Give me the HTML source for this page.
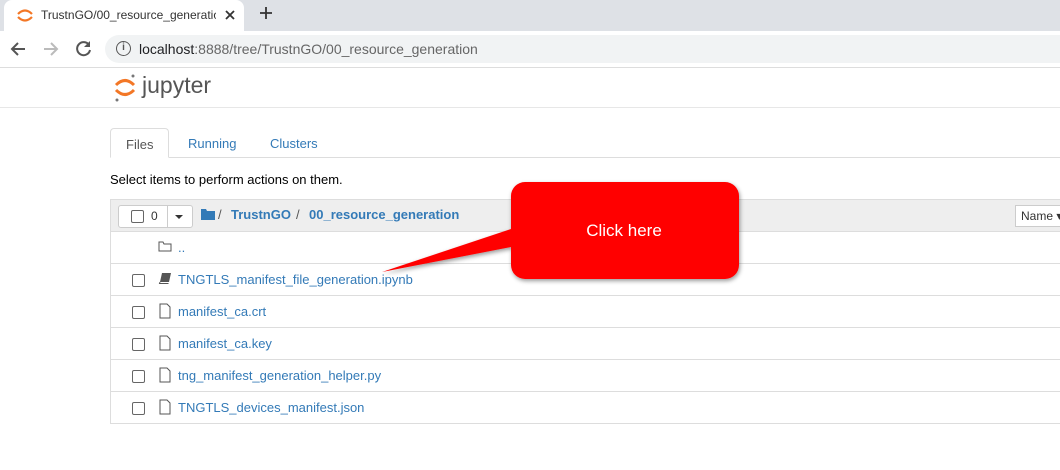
<!DOCTYPE html>
<html><head><style>
*{margin:0;padding:0;box-sizing:border-box}
body{width:1060px;height:470px;overflow:hidden;background:#fff;font-family:"Liberation Sans",Arial,sans-serif;position:relative}
.abs{position:absolute}
.row{position:absolute;left:110px;width:960px;height:32px;border-top:1px solid #ddd;font-size:13px}
.cb{position:absolute;left:22px;top:10px;width:13px;height:13px;border:1px solid #666;border-radius:2px;background:#fff}
.nm{position:absolute;left:68px;top:8px;color:#337ab7}
.ic{position:absolute;left:48px;top:7px}
</style></head><body>
<div class="abs" style="left:0;top:0;width:1060px;height:31px;background:#dee1e6"></div>
<div class="abs" style="left:4px;top:0;width:240px;height:31px;background:#fff;border-radius:8px 8px 0 0"></div>
<svg class="abs" style="left:16px;top:6px" width="18" height="18" viewBox="0 0 18 18"><path d="M2 8 Q9 1 16 8" stroke="#f37726" stroke-width="2.2" fill="none"/><path d="M2 11 Q9 18 16 11" stroke="#f37726" stroke-width="2.2" fill="none"/></svg>
<div class="abs" style="left:41px;top:8px;font-size:12px;color:#333;width:175px;overflow:hidden;white-space:nowrap">TrustnGO/00_resource_generation</div>
<svg class="abs" style="left:224px;top:9px" width="12" height="12"><path d="M2 2L10 10M10 2L2 10" stroke="#333" stroke-width="1.8"/></svg>
<svg class="abs" style="left:259px;top:6px" width="14" height="14"><path d="M7 1v12M1 7h12" stroke="#333" stroke-width="1.8"/></svg>
<svg class="abs" style="left:10px;top:41px" width="16" height="16"><path d="M15 8H2M8 2L2 8l6 6" stroke="#555" stroke-width="2" fill="none"/></svg>
<svg class="abs" style="left:43px;top:41px" width="16" height="16"><path d="M1 8h13M8 2l6 6-6 6" stroke="#bbb" stroke-width="2" fill="none"/></svg>
<svg class="abs" style="left:75px;top:40px" width="17" height="17"><path d="M14 5A6.5 6.5 0 1 0 15 10" stroke="#555" stroke-width="2" fill="none"/><path d="M15 1v6h-6z" fill="#555"/></svg>
<div class="abs" style="left:105px;top:35px;width:970px;height:28px;background:#f1f3f4;border-radius:14px"></div>
<div class="abs" style="left:116px;top:41px;width:15px;height:15px;border:1.5px solid #555;border-radius:50%;font-size:10px;text-align:center;line-height:12px;color:#555;font-weight:bold">i</div>
<div class="abs" style="left:139px;top:41px;font-size:14px;color:#202124">localhost<span style="color:#666">:8888/tree/TrustnGO/00_resource_generation</span></div>
<div class="abs" style="left:0;top:67px;width:1060px;height:1px;background:#ddd"></div>
<svg class="abs" style="left:113px;top:73px" width="24" height="30" viewBox="0 0 24 30"><path d="M3 12 Q12 3 21 12" stroke="#f37726" stroke-width="3" fill="none"/><path d="M3 17 Q12 26 21 17" stroke="#f37726" stroke-width="3" fill="none"/><circle cx="20" cy="3" r="1.5" fill="#767677"/><circle cx="4" cy="27" r="1.5" fill="#767677"/></svg>
<div class="abs" style="left:142px;top:72px;font-size:23px;color:#555">jupyter</div>
<div class="abs" style="left:0;top:107px;width:1060px;height:1px;background:#e7e7e7"></div>
<div class="abs" style="left:110px;top:157px;width:950px;height:1px;background:#ddd"></div>
<div class="abs" style="left:110px;top:128px;width:59px;height:30px;border:1px solid #ddd;border-bottom:1px solid #fff;border-radius:4px 4px 0 0;background:#fff;font-size:13px;color:#555;padding:8px 0 0 15px">Files</div>
<div class="abs" style="left:188px;top:136px;font-size:13px;color:#337ab7">Running</div>
<div class="abs" style="left:270px;top:136px;font-size:13px;color:#337ab7">Clusters</div>
<div class="abs" style="left:110px;top:172px;font-size:13px;color:#000">Select items to perform actions on them.</div>
<div class="abs" style="left:110px;top:199px;width:960px;height:225px;border:1px solid #ddd"></div>
<div class="abs" style="left:111px;top:200px;width:950px;height:31px;background:#eee"></div>
<div class="abs" style="left:118px;top:205px;width:75px;height:23px;border:1px solid #ccc;background:#fff;border-radius:3px"></div>
<div class="abs" style="left:167px;top:205px;width:1px;height:23px;background:#ccc"></div>
<div class="abs" style="left:131px;top:210px;width:13px;height:13px;border:1px solid #666;border-radius:2px"></div>
<div class="abs" style="left:151px;top:209px;font-size:12px;color:#333">0</div>
<div class="abs" style="left:175px;top:215px;border:4px solid transparent;border-top:4px solid #333"></div>
<svg class="abs" style="left:201px;top:208px" width="14" height="12"><path d="M0 1h5l1 2h8v9H0z" fill="#337ab7"/></svg>
<div class="abs" style="left:218px;top:207px;font-size:13px;color:#555">/</div>
<div class="abs" style="left:231px;top:207px;font-size:13px;color:#337ab7;font-weight:bold">TrustnGO</div>
<div class="abs" style="left:296px;top:207px;font-size:13px;color:#555">/</div>
<div class="abs" style="left:309px;top:207px;font-size:13px;color:#337ab7;font-weight:bold">00_resource_generation</div>
<div class="abs" style="left:1015px;top:205px;width:60px;height:22px;border:1px solid #ccc;background:#fff;font-size:12px;padding:3px 5px;color:#333">Name ▾</div>
<div class="row" style="top:231px"><svg class="ic" width="14" height="14"><path d="M1 3h4l1 2h7v7H1z" fill="none" stroke="#555"/></svg><span class="nm">..</span></div>
<div class="row" style="top:263px"><div class="cb"></div><svg class="ic" width="14" height="14"><path d="M4 2h9l-2 9H2z" fill="#555"/><path d="M2 11l-0.5 1.5h9" stroke="#555" fill="none"/></svg><span class="nm">TNGTLS_manifest_file_generation.ipynb</span></div>
<div class="row" style="top:295px"><div class="cb"></div><svg class="ic" width="14" height="16"><path d="M2 1h7l3 3v11H2z" fill="none" stroke="#555"/></svg><span class="nm">manifest_ca.crt</span></div>
<div class="row" style="top:327px"><div class="cb"></div><svg class="ic" width="14" height="16"><path d="M2 1h7l3 3v11H2z" fill="none" stroke="#555"/></svg><span class="nm">manifest_ca.key</span></div>
<div class="row" style="top:359px"><div class="cb"></div><svg class="ic" width="14" height="16"><path d="M2 1h7l3 3v11H2z" fill="none" stroke="#555"/></svg><span class="nm">tng_manifest_generation_helper.py</span></div>
<div class="row" style="top:391px"><div class="cb"></div><svg class="ic" width="14" height="16"><path d="M2 1h7l3 3v11H2z" fill="none" stroke="#555"/></svg><span class="nm">TNGTLS_devices_manifest.json</span></div>
<svg class="abs" style="left:0;top:0" width="1060" height="470"><defs><filter id="s"><feDropShadow dx="1" dy="2" stdDeviation="2" flood-opacity="0.4"/></filter></defs>
<g filter="url(#s)"><path d="M525 182h200a14 14 0 0 1 14 14v69a14 14 0 0 1-14 14H525a14 14 0 0 1-14-14v-18L382 272 511 229v-33a14 14 0 0 1 14-14z" fill="#f00"/></g>
<text x="624" y="236" font-family="Liberation Sans,sans-serif" font-size="17" fill="#fff" text-anchor="middle">Click here</text></svg>
</body></html>
